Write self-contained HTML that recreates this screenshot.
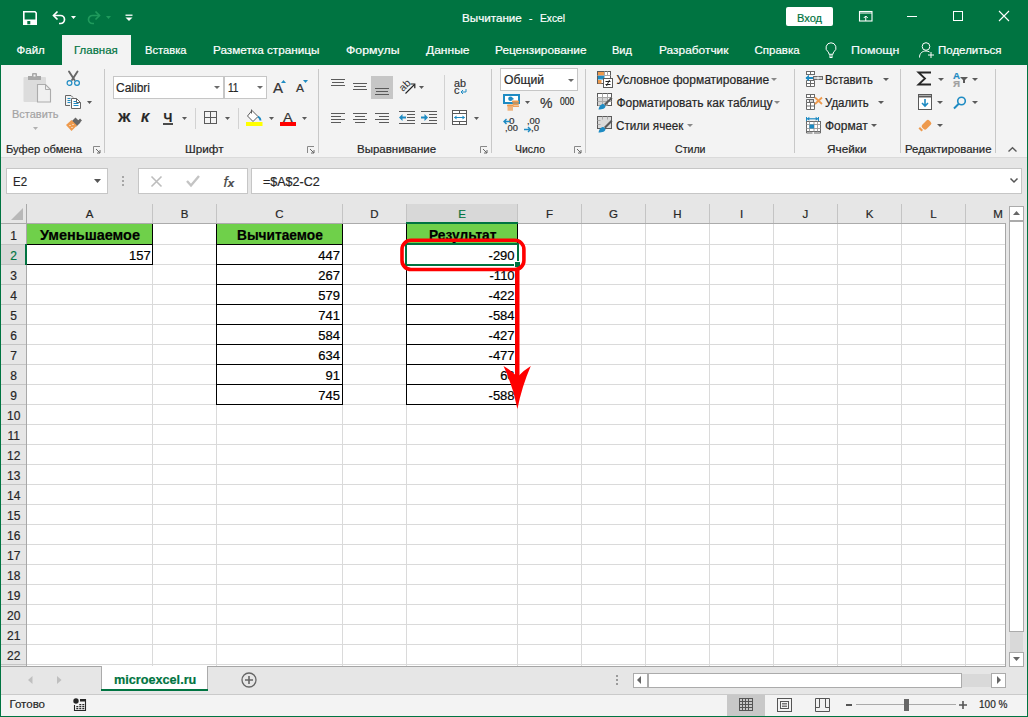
<!DOCTYPE html>
<html><head><meta charset="utf-8"><style>
*{box-sizing:border-box}
html,body{margin:0;padding:0}
body{width:1028px;height:717px;overflow:hidden;position:relative;background:#007441;font-family:"Liberation Sans",sans-serif}
.a{position:absolute}
.t{white-space:nowrap;-webkit-text-stroke:0.2px currentColor}
svg{overflow:visible}
</style></head><body>
<div class="a" style="left:0px;top:0px;width:1028px;height:65px;background:#007441"></div>
<svg class="a" style="left:23px;top:11px;" width="14" height="14" viewBox="0 0 14 14"><path d="M0.8 0.8h11.2l1.2 1.2v11.2H0.8z" fill="none" stroke="#fff" stroke-width="1.6"/><rect x="1" y="8.5" width="12" height="4.8" fill="#fff"/><rect x="4.3" y="10" width="3" height="3.3" fill="#007441"/></svg>
<svg class="a" style="left:51px;top:10px;" width="16" height="15" viewBox="0 0 16 15"><path d="M3 5.5h6.5a4 4 0 0 1 0 8H8" fill="none" stroke="#fff" stroke-width="1.7"/><path d="M6.5 1.5L2.5 5.5l4 4" fill="none" stroke="#fff" stroke-width="1.7"/></svg>
<svg class="a" style="left:71px;top:16px;" width="6" height="4" viewBox="0 0 6 4"><path d="M0 0h5L2.5 3z" fill="#fff"/></svg>
<svg class="a" style="left:86px;top:10px;" width="16" height="15" viewBox="0 0 16 15"><path d="M13 5.5H6.5a4 4 0 0 0 0 8H8" fill="none" stroke="#1f9a5c" stroke-width="1.7"/><path d="M9.5 1.5l4 4-4 4" fill="none" stroke="#1f9a5c" stroke-width="1.7"/></svg>
<svg class="a" style="left:106px;top:16px;" width="6" height="4" viewBox="0 0 6 4"><path d="M0 0h5L2.5 3z" fill="#1f9a5c"/></svg>
<svg class="a" style="left:125px;top:14px;" width="8" height="8" viewBox="0 0 8 8"><path d="M0.5 1.2h7" stroke="#fff" stroke-width="1.3"/><path d="M0.5 3.5h7L4 7z" fill="#fff"/></svg>
<div class="a t" style="left:461.80px;top:12.87px;font-size:11.5px;line-height:11.5px;color:#ffffff;font-weight:normal;transform:scaleX(1.0125);transform-origin:0 0;">Вычитание</div>
<div class="a t" style="left:528.60px;top:12.87px;font-size:11.5px;line-height:11.5px;color:#ffffff;font-weight:normal;transform:scaleX(0.8846);transform-origin:0 0;">-</div>
<div class="a t" style="left:539.50px;top:12.87px;font-size:11.5px;line-height:11.5px;color:#ffffff;font-weight:normal;transform:scaleX(0.8889);transform-origin:0 0;">Excel</div>
<div class="a" style="left:786px;top:7px;width:47px;height:19px;background:#fff;border-radius:2px"></div>
<div class="a t" style="left:797.00px;top:12.57px;font-size:11.5px;line-height:11.5px;color:#007441;font-weight:normal;transform:scaleX(0.9610);transform-origin:0 0;">Вход</div>
<svg class="a" style="left:859px;top:11px;" width="14" height="11" viewBox="0 0 14 11"><rect x="0.5" y="0.5" width="12.5" height="9.5" fill="none" stroke="#fff" stroke-width="1.1"/><path d="M0.5 2h12.5" stroke="#fff" stroke-width="1"/><path d="M6.75 10V5M4.75 7l2-2 2 2" fill="none" stroke="#fff" stroke-width="1"/></svg>
<div class="a" style="left:907px;top:16px;width:10px;height:1px;background:#fff"></div>
<div class="a" style="left:953px;top:11px;width:10px;height:10px;border:1px solid #fff"></div>
<svg class="a" style="left:999px;top:11px;" width="10" height="10" viewBox="0 0 10 10"><path d="M0 0L10 10M10 0L0 10" stroke="#fff" stroke-width="1.1"/></svg>
<div class="a" style="left:62px;top:35px;width:69px;height:30px;background:#f3f3f3"></div>
<div class="a t" style="left:16.50px;top:45.07px;font-size:11.5px;line-height:11.5px;color:#fff;font-weight:normal;">Файл</div>
<div class="a t" style="left:74.00px;top:45.07px;font-size:11.5px;line-height:11.5px;color:#007441;font-weight:normal;">Главная</div>
<div class="a t" style="left:145.00px;top:45.07px;font-size:11.5px;line-height:11.5px;color:#fff;font-weight:normal;transform:scaleX(0.9708);transform-origin:0 0;">Вставка</div>
<div class="a t" style="left:213.00px;top:45.07px;font-size:11.5px;line-height:11.5px;color:#fff;font-weight:normal;transform:scaleX(1.0208);transform-origin:0 0;">Разметка страницы</div>
<div class="a t" style="left:346.00px;top:45.07px;font-size:11.5px;line-height:11.5px;color:#fff;font-weight:normal;transform:scaleX(1.0690);transform-origin:0 0;">Формулы</div>
<div class="a t" style="left:425.50px;top:45.07px;font-size:11.5px;line-height:11.5px;color:#fff;font-weight:normal;transform:scaleX(1.0466);transform-origin:0 0;">Данные</div>
<div class="a t" style="left:495.00px;top:45.07px;font-size:11.5px;line-height:11.5px;color:#fff;font-weight:normal;transform:scaleX(1.0303);transform-origin:0 0;">Рецензирование</div>
<div class="a t" style="left:612.00px;top:45.07px;font-size:11.5px;line-height:11.5px;color:#fff;font-weight:normal;transform:scaleX(0.9610);transform-origin:0 0;">Вид</div>
<div class="a t" style="left:658.50px;top:45.07px;font-size:11.5px;line-height:11.5px;color:#fff;font-weight:normal;transform:scaleX(1.0361);transform-origin:0 0;">Разработчик</div>
<div class="a t" style="left:754.50px;top:45.07px;font-size:11.5px;line-height:11.5px;color:#fff;font-weight:normal;">Справка</div>
<div class="a t" style="left:850.50px;top:45.07px;font-size:11.5px;line-height:11.5px;color:#f4f9ff;font-weight:normal;transform:scaleX(1.0830);transform-origin:0 0;">Помощн</div>
<div class="a t" style="left:938.00px;top:45.07px;font-size:11.5px;line-height:11.5px;color:#fff;font-weight:normal;">Поделиться</div>
<svg class="a" style="left:825px;top:42px;" width="12" height="16" viewBox="0 0 12 16"><path d="M6 0.8a5 5 0 0 0-3 9c.8.7 1 1.5 1 2.5h4c0-1 .2-1.8 1-2.5a5 5 0 0 0-3-9z" fill="none" stroke="#fff" stroke-width="1"/><path d="M4 14h4M4.5 15.5h3" stroke="#fff" stroke-width="1"/></svg>
<svg class="a" style="left:919px;top:42px;" width="16" height="16" viewBox="0 0 16 16"><circle cx="7" cy="4.5" r="3.8" fill="none" stroke="#fff" stroke-width="1"/><path d="M0.5 15.5c0-4 2.5-6.5 6.5-6.5 1.5 0 2.5.3 3.5 1" fill="none" stroke="#fff" stroke-width="1"/><path d="M12 10v6M9 13h6" stroke="#fff" stroke-width="1"/></svg>
<div class="a" style="left:1px;top:65px;width:1026px;height:92px;background:#f3f3f3"></div>
<div class="a" style="left:1px;top:157px;width:1026px;height:1px;background:#dadada"></div>
<div class="a" style="left:1px;top:158px;width:1026px;height:510px;background:#e6e6e6"></div>
<div class="a" style="left:104px;top:69px;width:1px;height:84px;background:#c8c8c8"></div>
<div class="a" style="left:318px;top:69px;width:1px;height:84px;background:#c8c8c8"></div>
<div class="a" style="left:491px;top:69px;width:1px;height:84px;background:#c8c8c8"></div>
<div class="a" style="left:585px;top:69px;width:1px;height:84px;background:#c8c8c8"></div>
<div class="a" style="left:794px;top:69px;width:1px;height:84px;background:#c8c8c8"></div>
<div class="a" style="left:900px;top:69px;width:1px;height:84px;background:#c8c8c8"></div>
<div class="a" style="left:995px;top:69px;width:1px;height:84px;background:#c8c8c8"></div>
<div class="a t" style="left:6.00px;top:144.27px;font-size:11.5px;line-height:11.5px;color:#262626;font-weight:normal;transform:scaleX(0.9724);transform-origin:0 0;">Буфер обмена</div>
<div class="a t" style="left:184.50px;top:144.27px;font-size:11.5px;line-height:11.5px;color:#262626;font-weight:normal;transform:scaleX(1.0173);transform-origin:0 0;">Шрифт</div>
<div class="a t" style="left:357.00px;top:144.27px;font-size:11.5px;line-height:11.5px;color:#262626;font-weight:normal;">Выравнивание</div>
<div class="a t" style="left:515.00px;top:144.27px;font-size:11.5px;line-height:11.5px;color:#262626;font-weight:normal;transform:scaleX(0.9069);transform-origin:0 0;">Число</div>
<div class="a t" style="left:675.00px;top:144.27px;font-size:11.5px;line-height:11.5px;color:#262626;font-weight:normal;transform:scaleX(0.9203);transform-origin:0 0;">Стили</div>
<div class="a t" style="left:827.00px;top:144.27px;font-size:11.5px;line-height:11.5px;color:#262626;font-weight:normal;transform:scaleX(1.0239);transform-origin:0 0;">Ячейки</div>
<div class="a t" style="left:904.50px;top:144.27px;font-size:11.5px;line-height:11.5px;color:#262626;font-weight:normal;transform:scaleX(0.9873);transform-origin:0 0;">Редактирование</div>
<div class="a" style="left:6px;top:168px;width:102px;height:26px;background:#fff;border:1px solid #c6c6c6"></div>
<div class="a t" style="left:13.00px;top:175.72px;font-size:12.5px;line-height:12.5px;color:#262626;font-weight:normal;transform:scaleX(0.9152);transform-origin:0 0;">E2</div>
<svg class="a" style="left:94px;top:179px;" width="8" height="4" viewBox="0 0 8 4"><path d="M0 0h7L3.5 4z" fill="#555"/></svg>
<div class="a" style="left:122px;top:176px;width:2px;height:2px;background:#a6a6a6"></div>
<div class="a" style="left:122px;top:180px;width:2px;height:2px;background:#a6a6a6"></div>
<div class="a" style="left:122px;top:184px;width:2px;height:2px;background:#a6a6a6"></div>
<div class="a" style="left:138px;top:168px;width:110px;height:26px;background:#fff;border:1px solid #c6c6c6"></div>
<svg class="a" style="left:151px;top:176px;" width="11" height="11" viewBox="0 0 11 11"><path d="M0.5 0.5l10 10M10.5 0.5l-10 10" stroke="#bdbdbd" stroke-width="1.6"/></svg>
<svg class="a" style="left:186px;top:175px;" width="14" height="12" viewBox="0 0 14 12"><path d="M1 6l4 4.5L13 1" fill="none" stroke="#c4c4c4" stroke-width="2.4"/></svg>
<div class="a t" style="left:223.50px;top:173.80px;font-size:15px;line-height:15px;color:#4a4a4a;font-weight:normal;font-family:"Liberation Serif";"><i>f<span style="font-size:11.5px;font-weight:bold">x</span></i></div>
<div class="a" style="left:251px;top:168px;width:771px;height:26px;background:#fff;border:1px solid #c6c6c6"></div>
<div class="a t" style="left:263.00px;top:175.72px;font-size:12.5px;line-height:12.5px;color:#262626;font-weight:normal;">=$A$2-C2</div>
<svg class="a" style="left:1010px;top:178px;" width="8" height="5" viewBox="0 0 8 5"><path d="M0.5 0.5l3.5 3.5 3.5-3.5" fill="none" stroke="#555" stroke-width="1.5"/></svg>
<div class="a" style="left:1px;top:204px;width:1004px;height:19px;background:#e6e6e6"></div>
<div class="a" style="left:407px;top:204px;width:110px;height:19px;background:#d8d8d8"></div>
<div class="a" style="left:27px;top:224px;width:978px;height:442px;background:#fff"></div>
<div class="a" style="left:1px;top:224px;width:25px;height:442px;background:#e6e6e6"></div>
<div class="a" style="left:1px;top:245px;width:25px;height:19px;background:#d8d8d8"></div>
<svg class="a" style="left:11px;top:208px;" width="12" height="12" viewBox="0 0 12 12"><path d="M12 0V12H0z" fill="#b8b8b8"/></svg>
<div class="a" style="left:27px;top:244px;width:978px;height:1px;background:#dadada"></div>
<div class="a" style="left:1px;top:244px;width:25px;height:1px;background:#c4c4c4"></div>
<div class="a" style="left:27px;top:264px;width:978px;height:1px;background:#dadada"></div>
<div class="a" style="left:1px;top:264px;width:25px;height:1px;background:#c4c4c4"></div>
<div class="a" style="left:27px;top:284px;width:978px;height:1px;background:#dadada"></div>
<div class="a" style="left:1px;top:284px;width:25px;height:1px;background:#c4c4c4"></div>
<div class="a" style="left:27px;top:304px;width:978px;height:1px;background:#dadada"></div>
<div class="a" style="left:1px;top:304px;width:25px;height:1px;background:#c4c4c4"></div>
<div class="a" style="left:27px;top:324px;width:978px;height:1px;background:#dadada"></div>
<div class="a" style="left:1px;top:324px;width:25px;height:1px;background:#c4c4c4"></div>
<div class="a" style="left:27px;top:344px;width:978px;height:1px;background:#dadada"></div>
<div class="a" style="left:1px;top:344px;width:25px;height:1px;background:#c4c4c4"></div>
<div class="a" style="left:27px;top:364px;width:978px;height:1px;background:#dadada"></div>
<div class="a" style="left:1px;top:364px;width:25px;height:1px;background:#c4c4c4"></div>
<div class="a" style="left:27px;top:384px;width:978px;height:1px;background:#dadada"></div>
<div class="a" style="left:1px;top:384px;width:25px;height:1px;background:#c4c4c4"></div>
<div class="a" style="left:27px;top:404px;width:978px;height:1px;background:#dadada"></div>
<div class="a" style="left:1px;top:404px;width:25px;height:1px;background:#c4c4c4"></div>
<div class="a" style="left:27px;top:424px;width:978px;height:1px;background:#dadada"></div>
<div class="a" style="left:1px;top:424px;width:25px;height:1px;background:#c4c4c4"></div>
<div class="a" style="left:27px;top:444px;width:978px;height:1px;background:#dadada"></div>
<div class="a" style="left:1px;top:444px;width:25px;height:1px;background:#c4c4c4"></div>
<div class="a" style="left:27px;top:464px;width:978px;height:1px;background:#dadada"></div>
<div class="a" style="left:1px;top:464px;width:25px;height:1px;background:#c4c4c4"></div>
<div class="a" style="left:27px;top:484px;width:978px;height:1px;background:#dadada"></div>
<div class="a" style="left:1px;top:484px;width:25px;height:1px;background:#c4c4c4"></div>
<div class="a" style="left:27px;top:504px;width:978px;height:1px;background:#dadada"></div>
<div class="a" style="left:1px;top:504px;width:25px;height:1px;background:#c4c4c4"></div>
<div class="a" style="left:27px;top:524px;width:978px;height:1px;background:#dadada"></div>
<div class="a" style="left:1px;top:524px;width:25px;height:1px;background:#c4c4c4"></div>
<div class="a" style="left:27px;top:544px;width:978px;height:1px;background:#dadada"></div>
<div class="a" style="left:1px;top:544px;width:25px;height:1px;background:#c4c4c4"></div>
<div class="a" style="left:27px;top:564px;width:978px;height:1px;background:#dadada"></div>
<div class="a" style="left:1px;top:564px;width:25px;height:1px;background:#c4c4c4"></div>
<div class="a" style="left:27px;top:584px;width:978px;height:1px;background:#dadada"></div>
<div class="a" style="left:1px;top:584px;width:25px;height:1px;background:#c4c4c4"></div>
<div class="a" style="left:27px;top:604px;width:978px;height:1px;background:#dadada"></div>
<div class="a" style="left:1px;top:604px;width:25px;height:1px;background:#c4c4c4"></div>
<div class="a" style="left:27px;top:624px;width:978px;height:1px;background:#dadada"></div>
<div class="a" style="left:1px;top:624px;width:25px;height:1px;background:#c4c4c4"></div>
<div class="a" style="left:27px;top:644px;width:978px;height:1px;background:#dadada"></div>
<div class="a" style="left:1px;top:644px;width:25px;height:1px;background:#c4c4c4"></div>
<div class="a" style="left:27px;top:664px;width:978px;height:1px;background:#dadada"></div>
<div class="a" style="left:1px;top:664px;width:25px;height:1px;background:#c4c4c4"></div>
<div class="a" style="left:152px;top:224px;width:1px;height:442px;background:#dadada"></div>
<div class="a" style="left:152px;top:204px;width:1px;height:19px;background:#c4c4c4"></div>
<div class="a" style="left:216px;top:224px;width:1px;height:442px;background:#dadada"></div>
<div class="a" style="left:216px;top:204px;width:1px;height:19px;background:#c4c4c4"></div>
<div class="a" style="left:342px;top:224px;width:1px;height:442px;background:#dadada"></div>
<div class="a" style="left:342px;top:204px;width:1px;height:19px;background:#c4c4c4"></div>
<div class="a" style="left:406px;top:224px;width:1px;height:442px;background:#dadada"></div>
<div class="a" style="left:406px;top:204px;width:1px;height:19px;background:#c4c4c4"></div>
<div class="a" style="left:517px;top:224px;width:1px;height:442px;background:#dadada"></div>
<div class="a" style="left:517px;top:204px;width:1px;height:19px;background:#c4c4c4"></div>
<div class="a" style="left:581px;top:224px;width:1px;height:442px;background:#dadada"></div>
<div class="a" style="left:581px;top:204px;width:1px;height:19px;background:#c4c4c4"></div>
<div class="a" style="left:645px;top:224px;width:1px;height:442px;background:#dadada"></div>
<div class="a" style="left:645px;top:204px;width:1px;height:19px;background:#c4c4c4"></div>
<div class="a" style="left:709px;top:224px;width:1px;height:442px;background:#dadada"></div>
<div class="a" style="left:709px;top:204px;width:1px;height:19px;background:#c4c4c4"></div>
<div class="a" style="left:773px;top:224px;width:1px;height:442px;background:#dadada"></div>
<div class="a" style="left:773px;top:204px;width:1px;height:19px;background:#c4c4c4"></div>
<div class="a" style="left:837px;top:224px;width:1px;height:442px;background:#dadada"></div>
<div class="a" style="left:837px;top:204px;width:1px;height:19px;background:#c4c4c4"></div>
<div class="a" style="left:901px;top:224px;width:1px;height:442px;background:#dadada"></div>
<div class="a" style="left:901px;top:204px;width:1px;height:19px;background:#c4c4c4"></div>
<div class="a" style="left:965px;top:224px;width:1px;height:442px;background:#dadada"></div>
<div class="a" style="left:965px;top:204px;width:1px;height:19px;background:#c4c4c4"></div>
<div class="a" style="left:26px;top:204px;width:1px;height:462px;background:#b9b9b9"></div>
<div class="a" style="left:1005px;top:223px;width:1px;height:443px;background:#a6a6a6"></div>
<div class="a" style="left:1px;top:223px;width:1004px;height:1px;background:#ababab"></div>
<div class="a t" style="left:85.66px;top:209.07px;font-size:11.5px;line-height:11.5px;color:#262626;font-weight:normal;">A</div>
<div class="a t" style="left:180.66px;top:209.07px;font-size:11.5px;line-height:11.5px;color:#262626;font-weight:normal;">B</div>
<div class="a t" style="left:275.34px;top:209.07px;font-size:11.5px;line-height:11.5px;color:#262626;font-weight:normal;">C</div>
<div class="a t" style="left:370.34px;top:209.07px;font-size:11.5px;line-height:11.5px;color:#262626;font-weight:normal;">D</div>
<div class="a t" style="left:458.16px;top:209.07px;font-size:11.5px;line-height:11.5px;color:#007441;font-weight:normal;">E</div>
<div class="a t" style="left:545.98px;top:209.07px;font-size:11.5px;line-height:11.5px;color:#262626;font-weight:normal;">F</div>
<div class="a t" style="left:609.02px;top:209.07px;font-size:11.5px;line-height:11.5px;color:#262626;font-weight:normal;">G</div>
<div class="a t" style="left:673.34px;top:209.07px;font-size:11.5px;line-height:11.5px;color:#262626;font-weight:normal;">H</div>
<div class="a t" style="left:739.90px;top:209.07px;font-size:11.5px;line-height:11.5px;color:#262626;font-weight:normal;">I</div>
<div class="a t" style="left:802.62px;top:209.07px;font-size:11.5px;line-height:11.5px;color:#262626;font-weight:normal;">J</div>
<div class="a t" style="left:865.66px;top:209.07px;font-size:11.5px;line-height:11.5px;color:#262626;font-weight:normal;">K</div>
<div class="a t" style="left:930.30px;top:209.07px;font-size:11.5px;line-height:11.5px;color:#262626;font-weight:normal;">L</div>
<div class="a t" style="left:993.20px;top:209.07px;font-size:11.5px;line-height:11.5px;color:#262626;font-weight:normal;">M</div>
<div class="a t" style="left:10.36px;top:229.74px;font-size:12px;line-height:12px;color:#262626;font-weight:normal;">1</div>
<div class="a t" style="left:10.36px;top:249.74px;font-size:12px;line-height:12px;color:#007441;font-weight:normal;">2</div>
<div class="a t" style="left:10.36px;top:269.74px;font-size:12px;line-height:12px;color:#262626;font-weight:normal;">3</div>
<div class="a t" style="left:10.36px;top:289.74px;font-size:12px;line-height:12px;color:#262626;font-weight:normal;">4</div>
<div class="a t" style="left:10.36px;top:309.74px;font-size:12px;line-height:12px;color:#262626;font-weight:normal;">5</div>
<div class="a t" style="left:10.36px;top:329.74px;font-size:12px;line-height:12px;color:#262626;font-weight:normal;">6</div>
<div class="a t" style="left:10.36px;top:349.74px;font-size:12px;line-height:12px;color:#262626;font-weight:normal;">7</div>
<div class="a t" style="left:10.36px;top:369.74px;font-size:12px;line-height:12px;color:#262626;font-weight:normal;">8</div>
<div class="a t" style="left:10.36px;top:389.74px;font-size:12px;line-height:12px;color:#262626;font-weight:normal;">9</div>
<div class="a t" style="left:7.02px;top:409.74px;font-size:12px;line-height:12px;color:#262626;font-weight:normal;">10</div>
<div class="a t" style="left:7.47px;top:429.74px;font-size:12px;line-height:12px;color:#262626;font-weight:normal;">11</div>
<div class="a t" style="left:7.02px;top:449.74px;font-size:12px;line-height:12px;color:#262626;font-weight:normal;">12</div>
<div class="a t" style="left:7.02px;top:469.74px;font-size:12px;line-height:12px;color:#262626;font-weight:normal;">13</div>
<div class="a t" style="left:7.02px;top:489.74px;font-size:12px;line-height:12px;color:#262626;font-weight:normal;">14</div>
<div class="a t" style="left:7.02px;top:509.74px;font-size:12px;line-height:12px;color:#262626;font-weight:normal;">15</div>
<div class="a t" style="left:7.02px;top:529.74px;font-size:12px;line-height:12px;color:#262626;font-weight:normal;">16</div>
<div class="a t" style="left:7.02px;top:549.74px;font-size:12px;line-height:12px;color:#262626;font-weight:normal;">17</div>
<div class="a t" style="left:7.02px;top:569.74px;font-size:12px;line-height:12px;color:#262626;font-weight:normal;">18</div>
<div class="a t" style="left:7.02px;top:589.74px;font-size:12px;line-height:12px;color:#262626;font-weight:normal;">19</div>
<div class="a t" style="left:7.02px;top:609.74px;font-size:12px;line-height:12px;color:#262626;font-weight:normal;">20</div>
<div class="a t" style="left:7.02px;top:629.74px;font-size:12px;line-height:12px;color:#262626;font-weight:normal;">21</div>
<div class="a t" style="left:7.02px;top:649.74px;font-size:12px;line-height:12px;color:#262626;font-weight:normal;">22</div>
<div class="a" style="left:27px;top:224px;width:125px;height:20px;background:#6fd04a"></div>
<div class="a" style="left:217px;top:224px;width:125px;height:20px;background:#6fd04a"></div>
<div class="a" style="left:407px;top:224px;width:110px;height:20px;background:#6fd04a"></div>
<div class="a" style="left:26px;top:223px;width:127px;height:42px;border:1px solid #000"></div>
<div class="a" style="left:26px;top:244px;width:127px;height:1px;background:#000"></div>
<div class="a" style="left:216px;top:223px;width:127px;height:182px;border:1px solid #000"></div>
<div class="a" style="left:216px;top:244px;width:127px;height:1px;background:#000"></div>
<div class="a" style="left:216px;top:264px;width:127px;height:1px;background:#000"></div>
<div class="a" style="left:216px;top:284px;width:127px;height:1px;background:#000"></div>
<div class="a" style="left:216px;top:304px;width:127px;height:1px;background:#000"></div>
<div class="a" style="left:216px;top:324px;width:127px;height:1px;background:#000"></div>
<div class="a" style="left:216px;top:344px;width:127px;height:1px;background:#000"></div>
<div class="a" style="left:216px;top:364px;width:127px;height:1px;background:#000"></div>
<div class="a" style="left:216px;top:384px;width:127px;height:1px;background:#000"></div>
<div class="a" style="left:406px;top:223px;width:112px;height:182px;border:1px solid #000"></div>
<div class="a" style="left:406px;top:244px;width:112px;height:1px;background:#000"></div>
<div class="a" style="left:406px;top:264px;width:112px;height:1px;background:#000"></div>
<div class="a" style="left:406px;top:284px;width:112px;height:1px;background:#000"></div>
<div class="a" style="left:406px;top:304px;width:112px;height:1px;background:#000"></div>
<div class="a" style="left:406px;top:324px;width:112px;height:1px;background:#000"></div>
<div class="a" style="left:406px;top:344px;width:112px;height:1px;background:#000"></div>
<div class="a" style="left:406px;top:364px;width:112px;height:1px;background:#000"></div>
<div class="a" style="left:406px;top:384px;width:112px;height:1px;background:#000"></div>
<div class="a" style="left:1px;top:223px;width:1004px;height:1px;background:#ababab"></div>
<div class="a" style="left:26px;top:204px;width:1px;height:40px;background:#a8a8a8"></div>
<div class="a" style="left:26px;top:264px;width:1px;height:402px;background:#a8a8a8"></div>
<div class="a" style="left:25px;top:244px;width:2px;height:21px;background:#007441"></div>
<div class="a" style="left:406px;top:222px;width:112px;height:2px;background:#007441"></div>
<div class="a t" style="left:39.50px;top:228.15px;font-size:14px;line-height:14px;color:#000;font-weight:bold;transform:scaleX(1.0331);transform-origin:0 0;">Уменьшаемое</div>
<div class="a t" style="left:236.60px;top:228.15px;font-size:14px;line-height:14px;color:#000;font-weight:bold;transform:scaleX(0.9799);transform-origin:0 0;">Вычитаемое</div>
<div class="a t" style="left:428.95px;top:228.15px;font-size:14px;line-height:14px;color:#000;font-weight:bold;transform:scaleX(0.9816);transform-origin:0 0;">Результат</div>
<div class="a t" style="left:129.00px;top:248.80px;font-size:13px;line-height:13px;color:#000;font-weight:normal;">157</div>
<div class="a t" style="left:318.30px;top:248.80px;font-size:13px;line-height:13px;color:#000;font-weight:normal;">447</div>
<div class="a t" style="left:488.57px;top:248.80px;font-size:13px;line-height:13px;color:#000;font-weight:normal;">-290</div>
<div class="a t" style="left:318.30px;top:268.80px;font-size:13px;line-height:13px;color:#000;font-weight:normal;">267</div>
<div class="a t" style="left:489.54px;top:268.80px;font-size:13px;line-height:13px;color:#000;font-weight:normal;">-110</div>
<div class="a t" style="left:318.30px;top:288.80px;font-size:13px;line-height:13px;color:#000;font-weight:normal;">579</div>
<div class="a t" style="left:488.57px;top:288.80px;font-size:13px;line-height:13px;color:#000;font-weight:normal;">-422</div>
<div class="a t" style="left:318.30px;top:308.80px;font-size:13px;line-height:13px;color:#000;font-weight:normal;">741</div>
<div class="a t" style="left:488.57px;top:308.80px;font-size:13px;line-height:13px;color:#000;font-weight:normal;">-584</div>
<div class="a t" style="left:318.30px;top:328.80px;font-size:13px;line-height:13px;color:#000;font-weight:normal;">584</div>
<div class="a t" style="left:488.57px;top:328.80px;font-size:13px;line-height:13px;color:#000;font-weight:normal;">-427</div>
<div class="a t" style="left:318.30px;top:348.80px;font-size:13px;line-height:13px;color:#000;font-weight:normal;">634</div>
<div class="a t" style="left:488.57px;top:348.80px;font-size:13px;line-height:13px;color:#000;font-weight:normal;">-477</div>
<div class="a t" style="left:325.53px;top:368.80px;font-size:13px;line-height:13px;color:#000;font-weight:normal;">91</div>
<div class="a t" style="left:500.13px;top:368.80px;font-size:13px;line-height:13px;color:#000;font-weight:normal;">66</div>
<div class="a t" style="left:318.30px;top:388.80px;font-size:13px;line-height:13px;color:#000;font-weight:normal;">745</div>
<div class="a t" style="left:488.57px;top:388.80px;font-size:13px;line-height:13px;color:#000;font-weight:normal;">-588</div>
<div class="a" style="left:405px;top:243px;width:114px;height:23px;border:2px solid #007441"></div>
<div class="a" style="left:514px;top:261px;width:7px;height:7px;background:#007441;border:1px solid #fff"></div>
<div class="a" style="left:1009px;top:206px;width:15px;height:15px;background:#fff;border:1px solid #ababab"></div>
<svg class="a" style="left:1013px;top:211px;" width="8" height="4" viewBox="0 0 8 4"><path d="M0 4h7L3.5 0z" fill="#666"/></svg>
<div class="a" style="left:1009px;top:221px;width:15px;height:411px;background:#fff;border:1px solid #ababab"></div>
<div class="a" style="left:1010px;top:632px;width:13px;height:20px;background:#d9d9d9"></div>
<div class="a" style="left:1009px;top:652px;width:15px;height:15px;background:#fff;border:1px solid #ababab"></div>
<svg class="a" style="left:1013px;top:657px;" width="8" height="4" viewBox="0 0 8 4"><path d="M0 0h7L3.5 4z" fill="#666"/></svg>
<div class="a" style="left:1px;top:666px;width:1005px;height:1px;background:#a6a6a6"></div>
<div class="a" style="left:1px;top:667px;width:1026px;height:27px;background:#e6e6e6"></div>
<div class="a" style="left:101px;top:666px;width:107px;height:25px;background:#fff;border-left:1px solid #ababab;border-right:1px solid #ababab"></div>
<div class="a" style="left:101px;top:689px;width:107px;height:2px;background:#007441"></div>
<div class="a t" style="left:113.70px;top:673.00px;font-size:13px;line-height:13px;color:#007441;font-weight:bold;transform:scaleX(0.9734);transform-origin:0 0;">microexcel.ru</div>
<svg class="a" style="left:28px;top:676px;" width="5" height="8" viewBox="0 0 5 8"><path d="M4.5 0v8L0 4z" fill="#bfbfbf"/></svg>
<svg class="a" style="left:57px;top:676px;" width="5" height="8" viewBox="0 0 5 8"><path d="M0 0v8l4.5-4z" fill="#bfbfbf"/></svg>
<svg class="a" style="left:241px;top:672px;" width="16" height="16" viewBox="0 0 16 16"><circle cx="8" cy="8" r="7" fill="none" stroke="#666" stroke-width="1.3"/><path d="M8 4v8M4 8h8" stroke="#666" stroke-width="1.6"/></svg>
<div class="a" style="left:616px;top:675px;width:2px;height:2px;background:#9a9a9a"></div>
<div class="a" style="left:616px;top:679px;width:2px;height:2px;background:#9a9a9a"></div>
<div class="a" style="left:616px;top:683px;width:2px;height:2px;background:#9a9a9a"></div>
<div class="a" style="left:633px;top:673px;width:15px;height:15px;background:#fff;border:1px solid #ababab"></div>
<svg class="a" style="left:637px;top:676px;" width="4" height="8" viewBox="0 0 4 8"><path d="M4 0v8L0 4z" fill="#666"/></svg>
<div class="a" style="left:648px;top:673px;width:314px;height:15px;background:#fff;border:1px solid #ababab"></div>
<div class="a" style="left:962px;top:674px;width:29px;height:13px;background:#d9d9d9"></div>
<div class="a" style="left:991px;top:673px;width:15px;height:15px;background:#fff;border:1px solid #ababab"></div>
<svg class="a" style="left:997px;top:676px;" width="4" height="8" viewBox="0 0 4 8"><path d="M0 0v8l4-4z" fill="#666"/></svg>
<div class="a" style="left:1px;top:694px;width:1026px;height:1px;background:#cacaca"></div>
<div class="a" style="left:1px;top:695px;width:1026px;height:21px;background:#f3f3f3"></div>
<div class="a t" style="left:9.50px;top:698.57px;font-size:11.5px;line-height:11.5px;color:#262626;font-weight:normal;">Готово</div>
<svg class="a" style="left:73px;top:698px;" width="14" height="14" viewBox="0 0 14 14"><circle cx="3" cy="3" r="2.7" fill="#262626"/><rect x="7" y="1" width="6" height="2.5" fill="#262626"/><path d="M12.5 1V12.5H1.5V7" fill="none" stroke="#262626" stroke-width="1.1"/><path d="M6.3 6h2v1.2h-2zM9.3 6h2v1.2h-2zM3.3 8h2v1.2h-2zM6.3 8h2v1.2h-2zM9.3 8h2v1.2h-2zM3.3 10h2v1.2h-2zM6.3 10h2v1.2h-2zM9.3 10h2v1.2h-2z" fill="#262626"/></svg>
<div class="a" style="left:727px;top:695px;width:38px;height:21px;background:#c8c8c8"></div>
<svg class="a" style="left:739px;top:698px;" width="14" height="14" viewBox="0 0 14 14"><rect x="0.5" y="0.5" width="13" height="12" fill="none" stroke="#555"/><path d="M0.5 3.5h13M0.5 6.5h13M0.5 9.5h13M3.5 0.5v12M6.5 0.5v12M9.5 0.5v12" stroke="#555"/></svg>
<svg class="a" style="left:777px;top:698px;" width="15" height="14" viewBox="0 0 15 14"><rect x="0.5" y="0.5" width="14" height="13" fill="none" stroke="#555"/><rect x="3.5" y="3.5" width="8" height="7" fill="none" stroke="#555"/><path d="M5 5.5h5M5 7h5M5 8.5h5" stroke="#555" stroke-width="0.8"/></svg>
<svg class="a" style="left:815px;top:698px;" width="15" height="14" viewBox="0 0 15 14"><path d="M0.5 13.5V0.5h14v13zM0.5 9.5h4v-9M10.5 0.5v9h4" fill="none" stroke="#555"/></svg>
<div class="a" style="left:846px;top:704px;width:6px;height:2px;background:#555"></div>
<div class="a" style="left:856px;top:704px;width:100px;height:1px;background:#aaa"></div>
<div class="a" style="left:904px;top:699px;width:5px;height:12px;background:#666"></div>
<svg class="a" style="left:959px;top:701px;" width="8" height="8" viewBox="0 0 8 8"><path d="M4 0v8M0 4h8" stroke="#555" stroke-width="1.6"/></svg>
<div class="a t" style="left:978.50px;top:698.57px;font-size:11.5px;line-height:11.5px;color:#262626;font-weight:normal;transform:scaleX(0.8740);transform-origin:0 0;">100 %</div>
<svg class="a" style="left:398px;top:236px;" width="130" height="175" viewBox="0 0 130 175">
<rect x="4" y="4.3" width="121.9" height="29.2" rx="9" ry="9" fill="none" stroke="#ff0000" stroke-width="3.6"/>
<rect x="117" y="34" width="4.5" height="110" fill="#ff0000"/>
<path d="M105.5 130 Q113 134 119.4 141 Q126 134 132.8 130 Q124 150 119.4 173 Q115 150 105.5 130Z" fill="#ff0000"/>
</svg>
<svg class="a" style="left:23px;top:73px;" width="29" height="30" viewBox="0 0 29 30">
<rect x="0.5" y="4" width="22.5" height="25" rx="1" fill="#dcdcdc"/>
<path d="M5 3h13v4H5z" fill="#a8a8a8"/><rect x="9" y="0" width="5" height="4" rx="1" fill="#a8a8a8"/><rect x="10.5" y="1.5" width="2" height="2" fill="#f3f3f3"/>
<path d="M14.5 11.5h8l5 5v12.5h-13z" fill="#f0f0f0" stroke="#acacac" stroke-width="1.1"/>
<path d="M22.5 11.5v5h5" fill="none" stroke="#acacac"/>
</svg>
<div class="a t" style="left:12.00px;top:109.07px;font-size:11.5px;line-height:11.5px;color:#a3a3a3;font-weight:normal;transform:scaleX(0.9538);transform-origin:0 0;">Вставить</div>
<svg class="a" style="left:33px;top:127px;" width="6" height="3" viewBox="0 0 6 3"><path d="M0 0h5L2.5 3z" fill="#b0b0b0"/></svg>
<svg class="a" style="left:66px;top:71px;" width="15" height="16" viewBox="0 0 15 16">
<path d="M3 0.5L8.5 9M11.5 0.5L6 9" stroke="#666" stroke-width="1.9" stroke-linecap="round"/>
<circle cx="3.5" cy="12" r="2.4" fill="none" stroke="#1e8bc3" stroke-width="1.2"/>
<circle cx="11" cy="12" r="2.4" fill="none" stroke="#1e8bc3" stroke-width="1.2"/>
</svg>
<svg class="a" style="left:65px;top:95px;" width="16" height="15" viewBox="0 0 16 15">
<path d="M0.5 10.5V0.5H6L8 2.5" fill="none" stroke="#666"/>
<path d="M0.5 10.5H5" stroke="#666"/>
<path d="M6.5 3.5H11.5L15.5 7.5V13.5H6.5Z" fill="#fff" stroke="#666"/>
<path d="M11.5 3.5V7.5H15.5" fill="none" stroke="#666"/>
<path d="M2.5 3.5h3M2.5 5.5h3M2.5 7.5h3" stroke="#1e8bc3"/>
<path d="M8.5 6.5h3M8.5 8.5h5M8.5 10.5h5" stroke="#1e8bc3"/>
</svg>
<svg class="a" style="left:87px;top:101px;" width="6" height="3" viewBox="0 0 6 3"><path d="M0 0h5L2.5 3z" fill="#5a5a5a"/></svg>
<svg class="a" style="left:66px;top:117px;" width="16" height="15" viewBox="0 0 16 15">
<path d="M12 5.5L15 2.5" stroke="#666" stroke-width="2.6"/>
<path d="M5.5 4.5L9.5 0.5L14.5 5.5L10.5 9.5Z" fill="#666"/>
<path d="M0 8L5.5 3L11 8.5L5.5 14Z" fill="#ee9a4d"/>
<path d="M3.5 8.5h1M5.5 10.5h1M6.5 7.5h1" stroke="#fff" stroke-width="1"/>
</svg>
<svg class="a" style="left:93px;top:146px;" width="8" height="8" viewBox="0 0 8 8"><path d="M0.5 7V0.5H7" fill="none" stroke="#888"/><path d="M3 3l4 4M4 7h3V4" fill="none" stroke="#666"/></svg>
<div class="a" style="left:113px;top:76px;width:111px;height:23px;background:#fff;border:1px solid #c6c6c6"></div>
<div class="a t" style="left:116.00px;top:81.92px;font-size:12.5px;line-height:12.5px;color:#262626;font-weight:normal;transform:scaleX(0.9594);transform-origin:0 0;">Calibri</div>
<svg class="a" style="left:214px;top:86px;" width="6" height="3" viewBox="0 0 6 3"><path d="M0 0h6L3 3z" fill="#6a6a6a"/></svg>
<div class="a" style="left:223px;top:76px;width:44px;height:23px;background:#fff;border:1px solid #c6c6c6;border-left:2px solid #c6c6c6"></div>
<div class="a t" style="left:228.00px;top:81.92px;font-size:12.5px;line-height:12.5px;color:#262626;font-weight:normal;transform:scaleX(0.8087);transform-origin:0 0;">11</div>
<svg class="a" style="left:257px;top:86px;" width="6" height="3" viewBox="0 0 6 3"><path d="M0 0h6L3 3z" fill="#6a6a6a"/></svg>
<div class="a t" style="left:273.00px;top:80.55px;font-size:14px;line-height:14px;color:#333;font-weight:normal;transform:scaleX(1.0702);transform-origin:0 0;">A</div>
<svg class="a" style="left:281px;top:80px;" width="5" height="3" viewBox="0 0 5 3"><path d="M0 3h5L2.5 0z" fill="#1e8bc3"/></svg>
<div class="a t" style="left:296.00px;top:83.09px;font-size:11px;line-height:11px;color:#333;font-weight:normal;transform:scaleX(1.0894);transform-origin:0 0;">A</div>
<svg class="a" style="left:303px;top:80px;" width="5" height="3" viewBox="0 0 5 3"><path d="M0 0h5L2.5 3z" fill="#1e8bc3"/></svg>
<div class="a t" style="left:117.80px;top:111.92px;font-size:12.5px;line-height:12.5px;color:#262626;font-weight:bold;transform:scaleX(1.1138);transform-origin:0 0;">Ж</div>
<div class="a t" style="left:141.00px;top:111.92px;font-size:12.5px;line-height:12.5px;color:#262626;font-weight:bold;transform:scaleX(1.0732);transform-origin:0 0;font-style:italic;">К</div>
<div class="a t" style="left:163.50px;top:111.92px;font-size:12.5px;line-height:12.5px;color:#262626;font-weight:bold;">Ч</div>
<div class="a" style="left:163px;top:123px;width:10px;height:2px;background:#4a4a4a"></div>
<svg class="a" style="left:182px;top:117px;" width="5" height="3" viewBox="0 0 5 3"><path d="M0 0h5L2.5 3z" fill="#5a5a5a"/></svg>
<svg class="a" style="left:225px;top:117px;" width="5" height="3" viewBox="0 0 5 3"><path d="M0 0h5L2.5 3z" fill="#5a5a5a"/></svg>
<svg class="a" style="left:268.5px;top:117px;" width="5" height="3" viewBox="0 0 5 3"><path d="M0 0h5L2.5 3z" fill="#5a5a5a"/></svg>
<svg class="a" style="left:302px;top:117px;" width="5" height="3" viewBox="0 0 5 3"><path d="M0 0h5L2.5 3z" fill="#5a5a5a"/></svg>
<div class="a" style="left:195px;top:108px;width:1px;height:21px;background:#d2d2d2"></div>
<div class="a" style="left:238px;top:108px;width:1px;height:21px;background:#d2d2d2"></div>
<svg class="a" style="left:204px;top:111px;" width="13" height="13" viewBox="0 0 13 13"><rect x="0.5" y="0.5" width="12" height="12" fill="none" stroke="#5a5a5a"/><path d="M6.5 0.5v12M0.5 6.5h12" stroke="#5a5a5a"/></svg>
<svg class="a" style="left:246px;top:109px;" width="17" height="18" viewBox="0 0 17 18">
<path d="M6 1.5l6 6-5 5-5.5-5.5z" fill="#fff" stroke="#5a5a5a"/>
<path d="M5.5 0.5v4" stroke="#5a5a5a"/>
<path d="M12 7.5c1.5 1 2.5 2.5 2.5 4" fill="none" stroke="#1e8bc3" stroke-width="2"/>
<rect x="0" y="13" width="16.5" height="4" fill="#ffff00"/>
</svg>
<div class="a t" style="left:283.20px;top:110.50px;font-size:13px;line-height:13px;color:#333;font-weight:normal;transform:scaleX(1.1070);transform-origin:0 0;">A</div>
<div class="a" style="left:280px;top:122px;width:16px;height:4px;background:#ff0000"></div>
<svg class="a" style="left:307px;top:146px;" width="8" height="8" viewBox="0 0 8 8"><path d="M0.5 7V0.5H7" fill="none" stroke="#888"/><path d="M3 3l4 4M4 7h3V4" fill="none" stroke="#666"/></svg>
<div class="a" style="left:331px;top:79px;width:14px;height:1px;background:#5a5a5a"></div>
<div class="a" style="left:332px;top:82px;width:12px;height:1px;background:#5a5a5a"></div>
<div class="a" style="left:331px;top:85px;width:14px;height:1px;background:#5a5a5a"></div>
<div class="a" style="left:353px;top:83px;width:14px;height:1px;background:#5a5a5a"></div>
<div class="a" style="left:354px;top:86px;width:12px;height:1px;background:#5a5a5a"></div>
<div class="a" style="left:353px;top:89px;width:14px;height:1px;background:#5a5a5a"></div>
<div class="a" style="left:371px;top:76px;width:22px;height:23px;background:#c6c6c6"></div>
<div class="a" style="left:375px;top:88px;width:14px;height:1px;background:#5a5a5a"></div>
<div class="a" style="left:376px;top:91px;width:12px;height:1px;background:#5a5a5a"></div>
<div class="a" style="left:375px;top:94px;width:14px;height:1px;background:#5a5a5a"></div>
<svg class="a" style="left:398px;top:77px;" width="20" height="18" viewBox="0 0 20 18"><text x="0" y="0" transform="translate(5 15) rotate(-45)" font-family="Liberation Sans" font-size="10.5" fill="#333">ab</text><path d="M7.5 16.5L16.5 7.5" stroke="#222" stroke-width="1.1"/><path d="M12.5 7h4.3v4.3" fill="none" stroke="#222" stroke-width="1.2"/></svg>
<svg class="a" style="left:419px;top:86px;" width="5" height="3" viewBox="0 0 5 3"><path d="M0 0h5L2.5 3z" fill="#5a5a5a"/></svg>
<div class="a" style="left:444px;top:75px;width:1px;height:55px;background:#d2d2d2"></div>
<div class="a t" style="left:453.50px;top:77.77px;font-size:11.5px;line-height:11.5px;color:#333;font-weight:normal;transform:scaleX(0.9377);transform-origin:0 0;">ab</div>
<div class="a t" style="left:453.50px;top:85.27px;font-size:11.5px;line-height:11.5px;color:#333;font-weight:normal;transform:scaleX(0.9565);transform-origin:0 0;">c</div>
<svg class="a" style="left:460px;top:89px;" width="7" height="5" viewBox="0 0 7 5"><path d="M6 0v3H1M3 1L1 3l2 2" fill="none" stroke="#1e8bc3" stroke-width="1"/></svg>
<div class="a" style="left:331px;top:113px;width:14px;height:1px;background:#5a5a5a"></div>
<div class="a" style="left:331px;top:116px;width:10px;height:1px;background:#5a5a5a"></div>
<div class="a" style="left:331px;top:119px;width:14px;height:1px;background:#5a5a5a"></div>
<div class="a" style="left:331px;top:122px;width:10px;height:1px;background:#5a5a5a"></div>
<div class="a" style="left:353px;top:113px;width:14px;height:1px;background:#5a5a5a"></div>
<div class="a" style="left:355px;top:116px;width:10px;height:1px;background:#5a5a5a"></div>
<div class="a" style="left:353px;top:119px;width:14px;height:1px;background:#5a5a5a"></div>
<div class="a" style="left:355px;top:122px;width:10px;height:1px;background:#5a5a5a"></div>
<div class="a" style="left:375px;top:113px;width:14px;height:1px;background:#5a5a5a"></div>
<div class="a" style="left:379px;top:116px;width:10px;height:1px;background:#5a5a5a"></div>
<div class="a" style="left:375px;top:119px;width:14px;height:1px;background:#5a5a5a"></div>
<div class="a" style="left:379px;top:122px;width:10px;height:1px;background:#5a5a5a"></div>
<div class="a" style="left:399px;top:111px;width:16px;height:1px;background:#5a5a5a"></div>
<div class="a" style="left:407px;top:114px;width:8px;height:1px;background:#5a5a5a"></div>
<div class="a" style="left:407px;top:117px;width:8px;height:1px;background:#5a5a5a"></div>
<div class="a" style="left:407px;top:120px;width:8px;height:1px;background:#5a5a5a"></div>
<div class="a" style="left:399px;top:123px;width:16px;height:1px;background:#5a5a5a"></div>
<svg class="a" style="left:399px;top:114px;" width="7" height="7" viewBox="0 0 7 7"><path d="M0 3.5L3.5 0V2.5H7V4.5H3.5V7Z" fill="#1e8bc3"/></svg>
<div class="a" style="left:421px;top:111px;width:16px;height:1px;background:#5a5a5a"></div>
<div class="a" style="left:429px;top:114px;width:8px;height:1px;background:#5a5a5a"></div>
<div class="a" style="left:429px;top:117px;width:8px;height:1px;background:#5a5a5a"></div>
<div class="a" style="left:429px;top:120px;width:8px;height:1px;background:#5a5a5a"></div>
<div class="a" style="left:421px;top:123px;width:16px;height:1px;background:#5a5a5a"></div>
<svg class="a" style="left:421px;top:114px;" width="7" height="7" viewBox="0 0 7 7"><path d="M7 3.5L3.5 0V2.5H0V4.5H3.5V7Z" fill="#1e8bc3"/></svg>
<svg class="a" style="left:452px;top:110px;" width="16" height="15" viewBox="0 0 16 15">
<rect x="0.5" y="0.5" width="14" height="14" fill="#fff" stroke="#5a5a5a"/>
<path d="M0.5 3.5h14M0.5 11.5h14M7.5 0.5V3.5M7.5 11.5v3" stroke="#5a5a5a"/>
<path d="M2.5 7.5h10" stroke="#1e8bc3"/><path d="M2 7.5l2.5-2v4zM13 7.5l-2.5-2v4z" fill="#1e8bc3"/>
</svg>
<svg class="a" style="left:474px;top:117px;" width="5" height="3" viewBox="0 0 5 3"><path d="M0 0h5L2.5 3z" fill="#5a5a5a"/></svg>
<svg class="a" style="left:480px;top:146px;" width="8" height="8" viewBox="0 0 8 8"><path d="M0.5 7V0.5H7" fill="none" stroke="#888"/><path d="M3 3l4 4M4 7h3V4" fill="none" stroke="#666"/></svg>
<div class="a" style="left:500px;top:68px;width:78px;height:23px;background:#fff;border:1px solid #c6c6c6"></div>
<div class="a t" style="left:504.00px;top:74.42px;font-size:12.5px;line-height:12.5px;color:#262626;font-weight:normal;transform:scaleX(0.9723);transform-origin:0 0;">Общий</div>
<svg class="a" style="left:568px;top:78.5px;" width="6" height="3" viewBox="0 0 6 3"><path d="M0 0h6L3 3z" fill="#6a6a6a"/></svg>
<svg class="a" style="left:503px;top:94px;" width="17" height="17" viewBox="0 0 17 17">
<rect x="1" y="1" width="15" height="8" fill="#fff" stroke="#1e8bc3" stroke-width="2"/>
<circle cx="7.5" cy="4.8" r="2.3" fill="#1e8bc3"/><path d="M7.5 4.8h3" stroke="#1e8bc3" stroke-width="1.5"/>
<rect x="9" y="6.5" width="7" height="2.2" rx="1" fill="#ee9a4d"/><rect x="9.5" y="9.3" width="6.5" height="1.6" rx="0.8" fill="#ee9a4d"/><rect x="10" y="11.5" width="6" height="1.4" fill="#ee9a4d"/>
<rect x="4" y="10.5" width="6.5" height="2.2" rx="1" fill="#ee9a4d"/><rect x="4.5" y="13.3" width="5.5" height="1.4" fill="#ee9a4d"/><rect x="4.5" y="15.3" width="5.5" height="1.2" fill="#ee9a4d"/>
</svg>
<svg class="a" style="left:525px;top:101px;" width="5" height="3" viewBox="0 0 5 3"><path d="M0 0h5L2.5 3z" fill="#5a5a5a"/></svg>
<div class="a t" style="left:539.60px;top:95.73px;font-size:14.5px;line-height:14.5px;color:#333;font-weight:normal;transform:scaleX(0.9685);transform-origin:0 0;">%</div>
<div class="a t" style="left:559.80px;top:96.31px;font-size:10.5px;line-height:10.5px;color:#222;font-weight:normal;transform:scaleX(0.8100);transform-origin:0 0;">000</div>
<div class="a t" style="left:509.00px;top:117.38px;font-size:9px;line-height:9px;color:#333;font-weight:normal;transform:scaleX(1.0966);transform-origin:0 0;">0</div>
<div class="a t" style="left:505.00px;top:124.38px;font-size:9px;line-height:9px;color:#333;font-weight:normal;transform:scaleX(1.0387);transform-origin:0 0;">,00</div>
<svg class="a" style="left:503px;top:118px;" width="8" height="7" viewBox="0 0 8 7"><path d="M7.5 3.5H1M3.5 1L1 3.5 3.5 6" fill="none" stroke="#1e8bc3" stroke-width="1.4"/></svg>
<div class="a t" style="left:527.00px;top:117.38px;font-size:9px;line-height:9px;color:#333;font-weight:normal;transform:scaleX(1.0387);transform-origin:0 0;">,00</div>
<div class="a t" style="left:531.00px;top:124.38px;font-size:9px;line-height:9px;color:#333;font-weight:normal;transform:scaleX(1.0644);transform-origin:0 0;">,0</div>
<svg class="a" style="left:524px;top:126px;" width="8" height="7" viewBox="0 0 8 7"><path d="M0 3.5h6.5M4 1l2.5 2.5L4 6" fill="none" stroke="#1e8bc3" stroke-width="1.4"/></svg>
<svg class="a" style="left:574px;top:146px;" width="8" height="8" viewBox="0 0 8 8"><path d="M0.5 7V0.5H7" fill="none" stroke="#888"/><path d="M3 3l4 4M4 7h3V4" fill="none" stroke="#666"/></svg>
<svg class="a" style="left:597px;top:71px;" width="17" height="17" viewBox="0 0 17 17">
<rect x="0.5" y="0.5" width="13" height="12" fill="#fff" stroke="#5a5a5a"/>
<rect x="1" y="1" width="6.5" height="3.5" fill="#ee9a4d"/><rect x="1" y="5" width="6.5" height="3.5" fill="#1e8bc3"/><rect x="1" y="9" width="3.5" height="3.5" fill="#ee9a4d"/>
<path d="M0.5 4.5h13M7.5 0.5v4M10.5 0.5v4" stroke="#a8a8a8"/>
<rect x="6.5" y="7.5" width="9" height="9" fill="#fff" stroke="#5a5a5a"/>
<path d="M8.5 10.5h5M8.5 13.5h5M12.5 9l-3 6" stroke="#222" stroke-width="1"/>
</svg>
<svg class="a" style="left:597px;top:93px;" width="17" height="17" viewBox="0 0 17 17"><rect x="0.5" y="0.5" width="14" height="12" fill="#fff" stroke="#5a5a5a"/><rect x="1" y="4.5" width="9" height="8" fill="#d4d4d4"/><path d="M0.5 4.5h14M0.5 8.5h14M5.5 0.5v12M10.5 0.5v12" stroke="#a8a8a8" stroke-width="1"/><path d="M7 11L14 4l1.5 1.5L8.5 12.5z" fill="#5a5a5a"/><path d="M1.5 16.5c0.5-3 2-5.5 5-5.5l2 2c0 2.5-3 3.5-7 3.5z" fill="#1e8bc3"/></svg>
<svg class="a" style="left:597px;top:116px;" width="17" height="17" viewBox="0 0 17 17"><rect x="0.5" y="0.5" width="14" height="12" fill="#fff" stroke="#5a5a5a"/><rect x="1" y="1" width="13" height="11" fill="#dadada"/><path d="M0.5 4.5h3M0.5 8.5h3M5.5 0.5v3M10.5 0.5v3" stroke="#a8a8a8"/><path d="M7 11L14 4l1.5 1.5L8.5 12.5z" fill="#5a5a5a"/><path d="M1.5 16.5c0.5-3 2-5.5 5-5.5l2 2c0 2.5-3 3.5-7 3.5z" fill="#1e8bc3"/></svg>
<div class="a t" style="left:616.40px;top:74.34px;font-size:12px;line-height:12px;color:#262626;font-weight:normal;">Условное форматирование</div>
<svg class="a" style="left:771px;top:78px;" width="6" height="3" viewBox="0 0 6 3"><path d="M0 0h6L3 3z" fill="#888"/></svg>
<div class="a t" style="left:616.40px;top:96.84px;font-size:12px;line-height:12px;color:#262626;font-weight:normal;">Форматировать как таблицу</div>
<svg class="a" style="left:774px;top:101px;" width="6" height="3" viewBox="0 0 6 3"><path d="M0 0h6L3 3z" fill="#888"/></svg>
<div class="a t" style="left:616.40px;top:119.84px;font-size:12px;line-height:12px;color:#262626;font-weight:normal;transform:scaleX(0.9716);transform-origin:0 0;">Стили ячеек</div>
<svg class="a" style="left:687px;top:124px;" width="6" height="3" viewBox="0 0 6 3"><path d="M0 0h6L3 3z" fill="#888"/></svg>
<svg class="a" style="left:805px;top:70px;" width="18" height="17" viewBox="0 0 18 17">
<rect x="1.5" y="1.5" width="8" height="3" fill="#fff" stroke="#6a6a6a" stroke-width="1"/><path d="M5.5 1.5v3" stroke="#6a6a6a"/>
<rect x="8.5" y="6.5" width="9" height="3" fill="#cfcfcf" stroke="#6a6a6a" stroke-width="1"/><path d="M13 6.5v3" stroke="#fff"/>
<path d="M1.5 10.5h8v6h-8z" fill="#fff" stroke="#6a6a6a"/><path d="M5.5 10.5v6M1.5 13.5h8" stroke="#6a6a6a"/>
<path d="M1 8h7" stroke="#1e8bc3" stroke-width="2"/><path d="M0.5 8L4 4.8v6.4z" fill="#1e8bc3"/>
</svg>
<svg class="a" style="left:805px;top:93px;" width="18" height="17" viewBox="0 0 18 17">
<rect x="1.5" y="1.5" width="8" height="3" fill="#fff" stroke="#6a6a6a" stroke-width="1"/><path d="M5.5 1.5v3" stroke="#6a6a6a"/>
<path d="M1.5 6.5h3v3h-3z" fill="none" stroke="#6a6a6a"/><rect x="4.5" y="6.5" width="4" height="3" fill="#cfcfcf" stroke="#6a6a6a"/>
<path d="M1.5 9.5h8v7h-8z" fill="#fff" stroke="#6a6a6a"/><path d="M5.5 9.5v7M1.5 13h8" stroke="#6a6a6a"/>
<path d="M10 4.5l7 6.5M17 4.5l-7 6.5" stroke="#ee9a4d" stroke-width="1.8"/>
</svg>
<svg class="a" style="left:805px;top:116px;" width="17" height="18" viewBox="0 0 17 18">
<path d="M2 2.8h11" stroke="#1e8bc3" stroke-width="1.2"/><path d="M1.5 1v4M13.5 1v4" stroke="#1e8bc3"/><path d="M1.8 2.8l2.5-2v4zM13.2 2.8l-2.5-2v4z" fill="#1e8bc3"/>
<rect x="1.5" y="5.5" width="14" height="10" fill="#fff" stroke="#6a6a6a"/>
<path d="M1.5 8.5h14M1.5 12.5h14M4.5 5.5v10M9 5.5v10M12.5 5.5v10" stroke="#9a9a9a" stroke-width="0.9"/>
<rect x="4.5" y="8.5" width="4.5" height="4" fill="#1e8bc3"/>
<path d="M1.5 15.5v1.5h6M9 17h6.5v-1.5" fill="none" stroke="#6a6a6a"/>
</svg>
<div class="a t" style="left:825.00px;top:74.34px;font-size:12px;line-height:12px;color:#262626;font-weight:normal;transform:scaleX(0.9435);transform-origin:0 0;">Вставить</div>
<svg class="a" style="left:883px;top:78px;" width="6" height="3" viewBox="0 0 6 3"><path d="M0 0h6L3 3z" fill="#5a5a5a"/></svg>
<div class="a t" style="left:825.00px;top:97.34px;font-size:12px;line-height:12px;color:#262626;font-weight:normal;transform:scaleX(0.9536);transform-origin:0 0;">Удалить</div>
<svg class="a" style="left:878px;top:101px;" width="6" height="3" viewBox="0 0 6 3"><path d="M0 0h6L3 3z" fill="#5a5a5a"/></svg>
<div class="a t" style="left:825.00px;top:120.34px;font-size:12px;line-height:12px;color:#262626;font-weight:normal;">Формат</div>
<svg class="a" style="left:871px;top:124px;" width="6" height="3" viewBox="0 0 6 3"><path d="M0 0h6L3 3z" fill="#5a5a5a"/></svg>
<svg class="a" style="left:917px;top:71px;" width="15" height="15" viewBox="0 0 15 15"><path d="M14 1.5H1.5L8 7.5 1.5 13.5H14" fill="none" stroke="#262626" stroke-width="1.8"/></svg>
<svg class="a" style="left:938px;top:78px;" width="6" height="3" viewBox="0 0 6 3"><path d="M0 0h6L3 3z" fill="#5a5a5a"/></svg>
<div class="a t" style="left:953.00px;top:71.80px;font-size:8.5px;line-height:8.5px;color:#1e8bc3;font-weight:bold;transform:scaleX(1.1399);transform-origin:0 0;">A</div>
<div class="a t" style="left:953.00px;top:79.80px;font-size:8.5px;line-height:8.5px;color:#a0a0a0;font-weight:bold;transform:scaleX(1.1458);transform-origin:0 0;">Я</div>
<svg class="a" style="left:960px;top:77px;" width="8" height="6" viewBox="0 0 8 6"><path d="M0 0h8L5 3v3H3V3z" fill="#5a5a5a"/></svg>
<svg class="a" style="left:972px;top:78px;" width="6" height="3" viewBox="0 0 6 3"><path d="M0 0h6L3 3z" fill="#5a5a5a"/></svg>
<svg class="a" style="left:918px;top:94px;" width="14" height="16" viewBox="0 0 14 16">
<rect x="0.5" y="0.5" width="13" height="15" fill="#fff" stroke="#5a5a5a"/>
<path d="M0.5 2.5h13" stroke="#5a5a5a" stroke-width="2"/>
<path d="M7 5v7M4 9l3 3 3-3" fill="none" stroke="#1e8bc3" stroke-width="1.6"/>
</svg>
<svg class="a" style="left:937px;top:101px;" width="6" height="3" viewBox="0 0 6 3"><path d="M0 0h6L3 3z" fill="#5a5a5a"/></svg>
<svg class="a" style="left:953px;top:96px;" width="14" height="13" viewBox="0 0 14 13"><circle cx="8.5" cy="5" r="3.8" fill="none" stroke="#1e8bc3" stroke-width="1.6"/><path d="M6 7.5L1 12.5" stroke="#1e8bc3" stroke-width="2"/></svg>
<svg class="a" style="left:972px;top:101px;" width="6" height="3" viewBox="0 0 6 3"><path d="M0 0h6L3 3z" fill="#5a5a5a"/></svg>
<svg class="a" style="left:918px;top:118px;" width="14" height="14" viewBox="0 0 14 14"><rect x="3.5" y="3.8" width="10" height="6" rx="2" fill="#ee9a4d" transform="rotate(-45 8.5 6.8)"/><path d="M0.5 10.5L3.5 13.5 5 12 2 9z" fill="#ee9a4d"/></svg>
<svg class="a" style="left:937px;top:124px;" width="6" height="3" viewBox="0 0 6 3"><path d="M0 0h6L3 3z" fill="#5a5a5a"/></svg>
<svg class="a" style="left:1008px;top:147px;" width="10" height="5" viewBox="0 0 10 5"><path d="M0.5 4.5L4.5 0.8 8.5 4.5" fill="none" stroke="#5a5a5a" stroke-width="1.4"/></svg>
</body></html>
